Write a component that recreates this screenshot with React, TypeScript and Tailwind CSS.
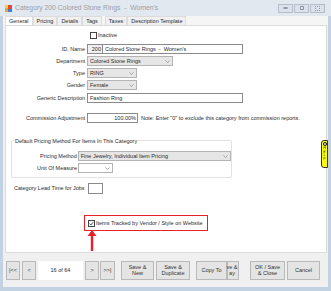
import React from 'react';

const font = { fontFamily: '"Liberation Sans", Arial, sans-serif' };

function Select({ w, value, gray = true }: { w: string; value: string; gray?: boolean }) {
  return (
    <div className={`${w} h-[10px] flex items-center justify-between border border-[#b4b4b4] ${gray ? 'bg-[#e6e6e6]' : 'bg-white'} pl-[2px] pr-[2px]`}>
      <span>{value}</span>
      <svg width="5" height="3" viewBox="0 0 5 3"><path d="M0.5 0.5 L2.5 2.5 L4.5 0.5" fill="none" stroke="#888" strokeWidth="0.7" /></svg>
    </div>
  );
}

function Btn({ w, children }: { w: string; children: React.ReactNode }) {
  return (
    <div className={`${w} h-[19px] flex items-center justify-center text-center leading-[6px] border border-[#b9b9b9] bg-[#e4e4e4] text-[#333]`}>
      {children}
    </div>
  );
}

export default function App() {
  const tabs = ['General', 'Pricing', 'Details', 'Tags', 'Taxes', 'Description Template'];
  return (
    <div className="w-[331px] h-[291px] bg-[#c3d2e3] flex flex-col text-[5.5px] text-[#2b2b2b] relative overflow-hidden" style={font}>
      {/* title bar */}
      <div className="h-[16px] flex items-center pl-[5px] pr-[6px] bg-[#e1e8f0]">
        <svg width="7" height="7" viewBox="0 0 7 7" className="mr-[3px]">
          <rect x="0" y="3" width="3" height="4" fill="#e8a23a" />
          <rect x="3" y="0" width="4" height="4" fill="#d94b3b" />
          <rect x="3" y="4" width="4" height="3" fill="#3f7fd0" />
          <rect x="0" y="0" width="3" height="3" fill="#f3d04a" />
        </svg>
        <span className="text-[6.8px] text-[#9aa0a8]">Category 200 Colored Stone Rings&nbsp; - &nbsp;Women's</span>
        <div className="ml-auto flex gap-[1px]">
          {[0, 1, 2].map(i => (
            <div key={i} className="w-[15px] h-[9px] border border-[#b3bdca] bg-[#dbe2eb] flex items-center justify-center">
              {i === 0 && <div className="w-[5px] h-[2px] border border-[#939ba6] rounded-full" />}
              {i === 1 && <div className="w-[4px] h-[4px] border border-[#939ba6]" />}
              {i === 2 && <div className="w-[5px] h-[5px] border border-dotted border-[#939ba6]" />}
            </div>
          ))}
        </div>
      </div>
      {/* body */}
      <div className="flex-1 flex flex-col bg-[#f0f0f0] ml-[3px] mr-[3px] mb-[4px]">
        <div className="h-[9px] flex items-end pl-[2px] bg-[#f5f5f5]">
          {tabs.map((t, i) => (
            <div key={t} className={`h-[9px] px-[3px] flex items-center border border-b-0 border-[#dcdcdc] ${i === 0 ? 'bg-white h-[10px] -mb-[1px]' : 'bg-[#f0f0f0]'} ${i === 4 ? 'ml-[3px]' : ''}`}>{t}</div>
          ))}
        </div>
        <div className="h-[228px] bg-white border border-[#dcdcdc] ml-[2px] mr-[1px] relative">
          {/* inactive */}
          <div className="flex items-center ml-[84px] mt-[6px] h-[7px] gap-[1px]">
            <div className="w-[7px] h-[7px] border border-[#444] bg-white" />
            <span>Inactive</span>
          </div>
          {/* rows */}
          <div className="flex flex-col gap-[2px] mt-[5px]">
            <div className="flex items-center h-[10px]">
              <div className="w-[81px] text-right pr-[2px]">ID, Name</div>
              <div className="w-[16px] h-[10px] border border-[#8a8a8a] bg-[#f0f0f0] text-right pr-[1px] leading-[8px]">200</div>
              <div className="w-[140px] h-[10px] border border-[#8a8a8a] border-l-0 pl-[2px] leading-[8px]">Colored Stone Rings&nbsp; - &nbsp;Women's</div>
            </div>
            <div className="flex items-center h-[10px]">
              <div className="w-[81px] text-right pr-[2px]">Department</div>
              <Select w="w-[86px]" value="Colored Stone Rings" />
            </div>
            <div className="flex items-center h-[10px]">
              <div className="w-[81px] text-right pr-[2px]">Type</div>
              <Select w="w-[50px]" value="RING" />
            </div>
            <div className="flex items-center h-[10px]">
              <div className="w-[81px] text-right pr-[2px]">Gender</div>
              <Select w="w-[50px]" value="Female" />
            </div>
            <div className="flex items-center h-[10px] mt-[1px]">
              <div className="w-[81px] text-right pr-[2px]">Generic Description</div>
              <div className="w-[156px] h-[10px] border border-[#8a8a8a] pl-[2px] leading-[8px]">Fashion Ring</div>
            </div>
          </div>
          <div className="flex items-center h-[10px] mt-[10px]">
            <div className="w-[81px] text-right pr-[2px]">Commission Adjustment</div>
            <div className="w-[51px] h-[10px] border border-[#8a8a8a] text-right pr-[1px] leading-[8px]">100.00%</div>
            <span className="ml-[3px]">Note: Enter "0" to exclude this category from commission reports.</span>
          </div>
          {/* group */}
          <div className="ml-[5px] w-[221px] h-[38px] mt-[17px] border border-[#e2e2e2] rounded-[2px] relative">
            <span className="absolute -top-[4px] left-[2px] bg-white px-[1px]">Default Pricing Method For Items In This Category</span>
            <div className="flex items-center h-[10px] mt-[10px]">
              <div className="w-[66px] text-right pr-[1px]">Pricing Method</div>
              <Select w="w-[154px]" value="Fine Jewelry, Individual Item Pricing" />
            </div>
            <div className="flex items-center h-[10px] mt-[2px]">
              <div className="w-[66px] text-right pr-[1px]">Unit Of Measure</div>
              <Select w="w-[35px]" value="" gray={false} />
            </div>
          </div>
          <div className="flex items-center h-[11px] mt-[5px] ml-[8px]">
            <span>Category Lead Time for Jobs</span>
            <div className="w-[15px] h-[11px] border border-[#8a8a8a] ml-[3px]" />
          </div>
          {/* highlighted checkbox */}
          <div className="ml-[78px] mt-[21px] w-[124px] h-[16px] border-[1.5px] border-[#e8202a] flex items-center pl-[3px] gap-[1px]">
            <div className="w-[7px] h-[7px] border border-[#444] bg-white flex items-center justify-center">
              <svg width="5" height="5" viewBox="0 0 5 5"><path d="M0.6 2.6 L2 4 L4.4 0.8" fill="none" stroke="#333" strokeWidth="0.8" /></svg>
            </div>
            <span>Items Tracked by Vendor / Style on Website</span>
          </div>
          <svg className="absolute left-[81px] top-[204px]" width="10" height="21" viewBox="0 0 10 21">
            <path d="M5 0 L9.5 6 L6.2 6 L6.2 21 L3.8 21 L3.8 6 L0.5 6 Z" fill="#e8202a" />
          </svg>
          {/* help tab */}
          <div className="absolute right-[-2px] top-[114px] w-[7px] h-[28px] bg-[#ffff00] border border-[#333] rounded-l-[3px] flex flex-col items-center pt-[1px]">
            <div className="w-[4px] h-[4px] rounded-full border border-black bg-white" />
            <div className="text-[3.5px] leading-[3.5px] text-center mt-[1px]">H<br />E<br />L<br />P</div>
          </div>
        </div>
        {/* bottom bar */}
        <div className="flex-1 flex items-center pl-[3px] pr-[3px]">
          <Btn w="w-[14px]">|&lt;&lt;</Btn>
          <div className="w-[2px]" />
          <Btn w="w-[14px]">&lt;</Btn>
          <div className="w-[45px] h-[19px] bg-white flex items-center justify-center ml-[2px] mr-[2px]">16 of 64</div>
          <Btn w="w-[14px]">&gt;</Btn>
          <div className="w-[1px]" />
          <Btn w="w-[15px]">&gt;&gt;|</Btn>
          <div className="w-[6px]" />
          <Btn w="w-[33px]">Save &amp;<br />New</Btn>
          <div className="w-[2px]" />
          <Btn w="w-[34px]">Save &amp;<br />Duplicate</Btn>
          <div className="w-[6px]" />
          <Btn w="w-[31px]">Copy To</Btn>
          <Btn w="w-[12px]"><span className="-ml-[2px]">ve &amp;<br />ay</span></Btn>
          <div className="w-[11px]" />
          <Btn w="w-[35px]">OK / Save<br />&amp; Close</Btn>
          <div className="w-[2px]" />
          <Btn w="w-[33px]">Cancel</Btn>
        </div>
      </div>
    </div>
  );
}
